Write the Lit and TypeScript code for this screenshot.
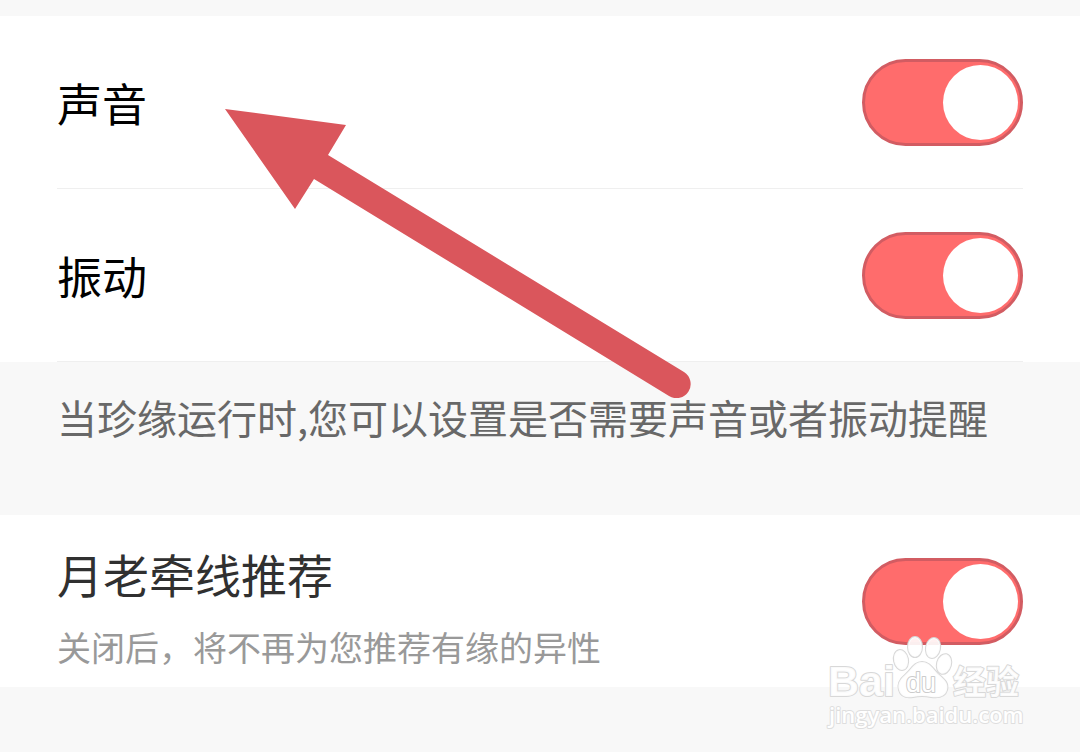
import { LitElement, html, css } from "lit";
import { customElement, property } from "lit/decorators.js";

@customElement("setting-row")
class SettingRow extends LitElement {
  static styles = css`
    :host {
      display: block;
      padding: 0 57px;
      background: #fff;
    }
    .row {
      display: flex;
      align-items: center;
      justify-content: space-between;
      gap: 24px;
      padding: 43px 0 42px;
      border-bottom: 1px solid #efefef;
    }
    .row.detailed {
      align-items: flex-start;
      padding: 28px 0 18px;
      border-bottom: 0;
    }
    .text {
      display: flex;
      flex-direction: column;
      gap: 22px;
      cursor: pointer;
    }
    .title {
      font-size: 45px;
      line-height: 60px;
      color: #000;
    }
    .detailed .title {
      font-size: 46px;
      color: #303030;
    }
    .hint {
      font-size: 34px;
      line-height: 44px;
      color: #999;
    }
    .switch {
      appearance: none;
      flex: none;
      box-sizing: border-box;
      display: flex;
      align-items: center;
      width: 161px;
      height: 87px;
      margin: 0;
      padding: 0 2px;
      border: 3px solid #d25c62;
      border-radius: 44px;
      background: #d9d9d9;
      cursor: pointer;
    }
    .detailed .switch {
      margin-top: 15px;
    }
    .switch::before {
      content: "";
      width: 75px;
      height: 75px;
      border-radius: 50%;
      background: #fff;
    }
    .switch:checked {
      justify-content: flex-end;
      background: #ff6c6c;
    }
  `;

  @property() title = "";
  @property() hint = "";

  render() {
    return html`
      <div class="row ${this.hint ? "detailed" : ""}">
        <label class="text" for="toggle">
          <span class="title">${this.title}</span>
          ${this.hint ? html`<span class="hint">${this.hint}</span>` : ""}
        </label>
        <input class="switch" id="toggle" type="checkbox" role="switch" checked />
      </div>
    `;
  }
}

@customElement("app-root")
class AppRoot extends LitElement {
  static styles = css`
    :host {
      display: block;
      position: relative;
      box-sizing: border-box;
      min-height: 100vh;
      padding-top: 16px;
      overflow: hidden;
      background: #f8f8f8;
      font-family: "Noto Sans CJK SC", sans-serif;
    }
    .note {
      margin: 0;
      padding: 25px 57px 68px;
      font-size: 40px;
      line-height: 60px;
      color: #686868;
    }
    .arrow {
      position: absolute;
      left: 225px;
      top: 109px;
      width: 466px;
      height: 289px;
      pointer-events: none;
    }
    .watermark {
      position: absolute;
      right: 50px;
      bottom: 12px;
      width: 210px;
      height: 110px;
      pointer-events: none;
    }
    .mark {
      fill: #fff;
      fill-opacity: 0.9;
      stroke: #d8d8d8;
      stroke-width: 2px;
      paint-order: stroke;
      stroke-linejoin: round;
    }
    .latin {
      font: bold 43px "Liberation Sans", sans-serif;
    }
    .du {
      font: 27px "Liberation Sans", sans-serif;
      fill-opacity: 1;
      stroke: #cccccc;
    }
    .han {
      font: bold 33px "Noto Sans CJK SC", sans-serif;
    }
    .url {
      font: 600 22px "Open Sans", sans-serif;
      fill-opacity: 1;
      stroke: #dedede;
    }
  `;

  render() {
    return html`
      <main>
        <setting-row title="声音"></setting-row>
        <setting-row title="振动"></setting-row>
        <p class="note">当珍缘运行时,您可以设置是否需要声音或者振动提醒</p>
        <setting-row title="月老牵线推荐" hint="关闭后，将不再为您推荐有缘的异性"></setting-row>
      </main>
      <svg class="arrow" viewBox="0 0 466 289" aria-hidden="true">
        <path
          d="M0 0L121 16L103 46L459 263A14 14 0 0 1 444 287L89 70L70 100Z"
          fill="#da565c"
        />
      </svg>
      <svg class="watermark" viewBox="820 630 210 110">
        <ellipse class="mark" cx="901" cy="660" rx="7" ry="10" transform="rotate(-12 901 660)" />
        <ellipse class="mark" cx="915" cy="647" rx="7" ry="10" />
        <ellipse class="mark" cx="933" cy="648" rx="7" ry="10" transform="rotate(12 933 648)" />
        <ellipse class="mark" cx="944" cy="664" rx="7" ry="10" transform="rotate(15 944 664)" />
        <path
          class="mark"
          d="M922 662C914 662 911 670 906 674C900 679 897 684 899 690C901 697 907 698 913 697Q922 695 931 697C938 698 945 697 947 690C949 683 944 679 938 674C933 669 930 662 922 662Z"
        />
        <text class="mark latin" x="828" y="696">Bai</text>
        <text class="mark du" x="906" y="692">du</text>
        <text class="mark han" x="953" y="694">经验</text>
        <text class="mark url" x="829" y="723">jingyan.baidu.com</text>
      </svg>
    `;
  }
}
